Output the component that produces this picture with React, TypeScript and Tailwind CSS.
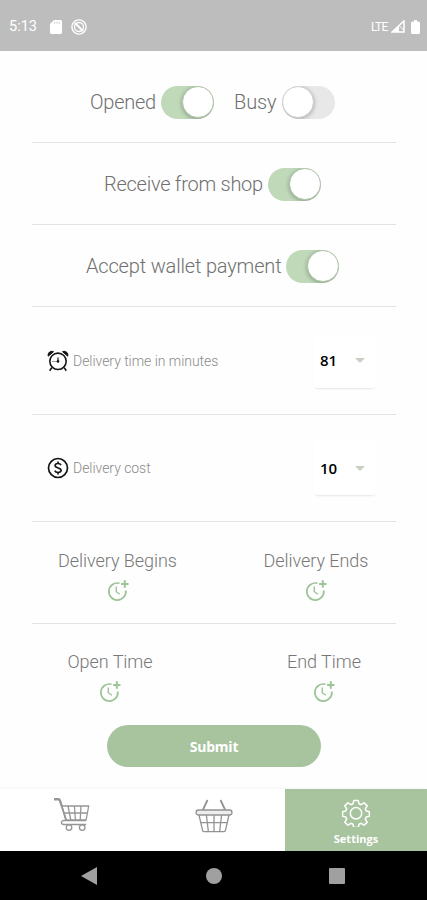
import type { ReactNode } from 'react';

function Toggle({ on = false }: { on?: boolean }) {
  return (
    <span
      className={
        'flex h-[33px] w-[53px] shrink-0 items-center overflow-hidden rounded-full ' +
        (on ? 'justify-end bg-[#bfd9b9]' : 'justify-start bg-[#e8e8e8]')
      }
    >
      <span
        className={
          'h-[32px] w-[32px] rounded-full border bg-white shadow-[0_1px_4px_rgba(0,0,0,0.3)] ' +
          (on ? 'border-[#b0c5aa]' : 'border-[#cecece]')
        }
      />
    </span>
  );
}

function ClockPlus() {
  return (
    <svg width="24" height="24" viewBox="0 0 24 24" fill="none" stroke="#9cc496" strokeWidth="1.7">
      <path d="M13.5 4.3A8.5 8.5 0 1 0 19.8 11.5" />
      <path d="M10.300 7.6v5.1l3.600 2.6" strokeWidth="1.4" />
      <path d="M18.800 1.300v7.400M15.100 5h7.400" strokeWidth="2" />
    </svg>
  );
}

function AlarmClock() {
  return (
    <svg width="22" height="22" viewBox="0 0 22 22" fill="none" stroke="#151515" strokeWidth="1.6">
      <circle cx="11" cy="11.3" r="8.2" />
      <path d="M1.3 6.2C.3 3 3.3.4 6.5 1.7ZM20.7 6.2c1-3.2-2-5.8-5.2-4.5Z" fill="#151515" strokeWidth="1" />
      <path d="M4.8 17.6 2.7 20.7M17.2 17.6l2.1 3.1" />
      <path d="M11 7.500v4.200" strokeWidth="1.200" />
      <path d="M5 11.5h5.5" strokeWidth=".7" stroke="#777" />
      <circle cx="11" cy="11.4" r="1.100" fill="#151515" strokeWidth=".6" />
    </svg>
  );
}

function Coin() {
  return (
    <svg width="22" height="22" viewBox="0 0 22 22" fill="none" stroke="#151515" strokeWidth="1.7">
      <circle cx="11" cy="11" r="9.5" />
      <path d="M14 8.1C13.4 6.9 12.4 6.5 11 6.5c-1.8 0-2.900.8-2.900 2.1 0 3.1 6 1.6 6 4.7 0 1.4-1.3 2.2-3.1 2.2-1.6 0-2.7-.6-3.2-1.8M11 4.6v2M11 15.4v2" />
    </svg>
  );
}

function Cart() {
  return (
    <svg width="38" height="34" viewBox="0 0 38 34" fill="none" stroke="#969696" strokeWidth="1.3" strokeLinejoin="round">
      <path d="M1 1.3h4.2c1 0 1.5.5 1.8 1.4l1.700 5.300" strokeWidth="2.4" />
      <path d="M8.700 8l4.400 14" strokeWidth="1.800" />
      <path d="M8.7 8h27l-2.6 14H13.1ZM10.3 15h24.100M15 8l2.8 14M21.4 8l1 14M28 8l-.8 14M33.200 22.500H11c-3.500 0-3.500 4 0 4h22.200" />
      <circle cx="16" cy="29.6" r="2.8" />
      <circle cx="29.2" cy="29.6" r="2.8" />
    </svg>
  );
}

function Basket() {
  return (
    <svg width="38" height="34" viewBox="0 0 38 34" fill="none" stroke="#939393" strokeWidth="1.3" strokeLinejoin="round">
      <path d="m12.5 1-4.7 10M25.5 1l4.7 10" strokeWidth="1.8" />
      <rect x="1" y="11" width="36" height="5" rx="2.5" fill="#ededed" />
      <path d="m4 16 3.5 15.2c.3 1 .8 1.5 1.8 1.5h19.4c1 0 1.5-.5 1.8-1.5L34 16M5.7 23.7h26.6M11.400 16l1.900 16M19 16v16M26.600 16l-1.900 16" />
    </svg>
  );
}

function Gear() {
  return (
    <svg width="28" height="28" viewBox="0 0 28 28" fill="none" stroke="white" strokeWidth="1.5" strokeLinejoin="round">
      <path d="M11.8 1.4h4.4l.8 3.4 2.1.9 3-1.9 3.1 3.1-1.9 3 .9 2.1 3.2.7v4.5l-3.2.8-.9 2.1 1.9 3-3.1 3.1-3-1.9-2.1.9-.8 3.3h-4.4l-.8-3.3-2.1-.9-3 1.9-3.1-3.1 1.9-3-.9-2.1-3.2-.8v-4.5l3.2-.7.9-2.1-1.9-3 3.1-3.1 3 1.9 2.1-.9Z" />
      <circle cx="14" cy="14.2" r="5.7" />
    </svg>
  );
}

function StatusBar() {
  return (
    <header className="flex h-[51px] items-center bg-[#bdbdbd] pt-[2px] pr-[7px] pl-[9px] text-white">
      <span className="w-[41px] pt-[2px] text-[14.5px] leading-none">5:13</span>
      <svg width="12" height="14" viewBox="0 0 12 14" fill="white">
        <path d="M4 0h6.5A1.5 1.5 0 0 1 12 1.5v11a1.5 1.5 0 0 1-1.5 1.5h-9A1.5 1.5 0 0 1 0 12.500V4Z" />
        <path d="M4.7 1.7v2M7 1.700v2M9.300 1.700v2" stroke="#bdbdbd" strokeWidth=".8" />
      </svg>
      <svg className="ml-[9px]" width="16" height="16" viewBox="0 0 16 16" fill="none" stroke="white">
        <circle cx="8" cy="8" r="7.100" strokeWidth="1.400" />
        <circle cx="8" cy="8" r="4.500" strokeWidth="1.300" />
        <path d="m4 4 8 8" strokeWidth="2" />
      </svg>
      <span className="ml-auto w-[20px] text-[12px] leading-none tracking-[-0.8px]">LTE</span>
      <svg width="14" height="13" viewBox="0 0 14 13">
        <path d="M1 12 13 1v11Z" fill="none" stroke="white" strokeWidth="1.500" />
        <path d="M1 12 8 5.700V12Z" fill="white" />
        <path d="m8.500 6 4.500 4.500" stroke="white" />
      </svg>
      <svg className="ml-[6px]" width="9" height="14" viewBox="0 0 9 14" fill="white">
        <path d="M3 0h3v1.500h1.500A1.500 1.500 0 0 1 9 3v9.500A1.500 1.500 0 0 1 7.500 14h-6A1.500 1.500 0 0 1 0 12.500V3a1.500 1.500 0 0 1 1.500-1.500H3Z" />
      </svg>
    </header>
  );
}

function NumberRow({ icon, label, value, className }: { icon: ReactNode; label: string; value: string; className: string }) {
  return (
    <div className={'flex items-center border-b border-[#e3e3e3] pr-[20px] pl-[15px] ' + className}>
      {icon}
      <span className="ml-[4px] text-[14px] leading-5 font-light tracking-[-0.04px] whitespace-nowrap text-[#8a8a8a]">{label}</span>
      <div className="ml-auto flex h-[54px] w-[62px] items-center justify-between rounded-[4px] bg-white pr-[11px] pl-[6px] shadow-[0_2px_2px_-1px_rgba(0,0,0,0.1)]">
        <span className="font-['Open_Sans',sans-serif] text-[15px] font-semibold text-black">{value}</span>
        <span className="h-0 w-0 border-x-[5px] border-t-[5px] border-x-transparent border-t-[#c8cfc3]" />
      </div>
    </div>
  );
}

function Time({ label, className }: { label: string; className: string }) {
  return (
    <div className={'flex flex-col items-center ' + className}>
      <span className="text-[18px] leading-[26px] font-light tracking-[-0.05px] whitespace-nowrap text-[#777]">{label}</span>
      <span className="mt-[5px]"><ClockPlus /></span>
    </div>
  );
}

export default function App() {
  const label = 'text-[20px] leading-7 font-light whitespace-nowrap text-[#707070] ';
  return (
    <div className="flex h-[900px] w-[427px] flex-col overflow-hidden bg-[#fefefe] font-['Roboto',sans-serif]">
      <StatusBar />
      <main className="flex h-[738px] flex-col pr-[31px] pl-[32px]">
        <div className="flex h-[92px] items-center border-b border-[#e3e3e3] pt-[11px] pl-[58px]">
          <span className={label + 'w-[71px] tracking-[-0.25px]'}>Opened</span>
          <Toggle on />
          <span className={label + 'ml-[20px] w-[48px] tracking-[-0.1px]'}>Busy</span>
          <Toggle />
        </div>
        <div className="flex h-[82px] items-center border-b border-[#e3e3e3] pt-[1px] pl-[72px]">
          <span className={label + 'w-[164px] tracking-[-0.26px]'}>Receive from shop</span>
          <Toggle on />
        </div>
        <div className="flex h-[82px] items-center border-b border-[#e3e3e3] pt-[1px] pl-[54px]">
          <span className={label + 'w-[200px] tracking-[-0.17px]'}>Accept wallet payment</span>
          <Toggle on />
        </div>
        <NumberRow icon={<AlarmClock />} label="Delivery time in minutes" value="81" className="h-[108px]" />
        <NumberRow icon={<Coin />} label="Delivery cost" value="10" className="h-[107px]" />
        <div className="flex h-[102px] justify-between border-b border-[#e3e3e3] pt-[26px] pr-[27px] pl-[26px]">
          <Time label="Delivery Begins" className="w-[119px]" />
          <Time label="Delivery Ends" className="w-[106px]" />
        </div>
        <div className="flex h-[101px] shrink-0 justify-between pt-[25px] pr-[35px] pl-[35px]">
          <Time label="Open Time" className="w-[86px]" />
          <Time label="End Time" className="w-[74px]" />
        </div>
        <button className="ml-[75px] h-[42px] w-[214px] shrink-0 rounded-full bg-[#a8c49f] font-['Open_Sans',sans-serif] text-[14px] font-bold tracking-[-0.2px] text-white">
          Submit
        </button>
      </main>
      <nav className="flex h-[62px] shrink-0 bg-white shadow-[0_-1px_3px_rgba(0,0,0,0.04)]">
        <div className="flex w-[143px] justify-center pt-[9px]"><Cart /></div>
        <div className="flex w-[142px] justify-center pt-[10px]"><Basket /></div>
        <div className="flex w-[142px] flex-col items-center bg-[#a8c49f] pt-[10px] text-white">
          <Gear />
          <span className="mt-[4px] font-['Open_Sans',sans-serif] text-[11px] leading-[15px] font-bold">Settings</span>
        </div>
      </nav>
      <footer className="flex h-[49px] shrink-0 items-center bg-black pl-[81px]">
        <svg width="16" height="18" viewBox="0 0 16 18" fill="#a0a0a0"><path d="M16 0v18L0 9Z" /></svg>
        <span className="ml-[109px] h-[16px] w-[16px] rounded-full bg-[#a0a0a0]" />
        <span className="ml-[107px] h-[16px] w-[16px] rounded-[1px] bg-[#a0a0a0]" />
      </footer>
    </div>
  );
}
